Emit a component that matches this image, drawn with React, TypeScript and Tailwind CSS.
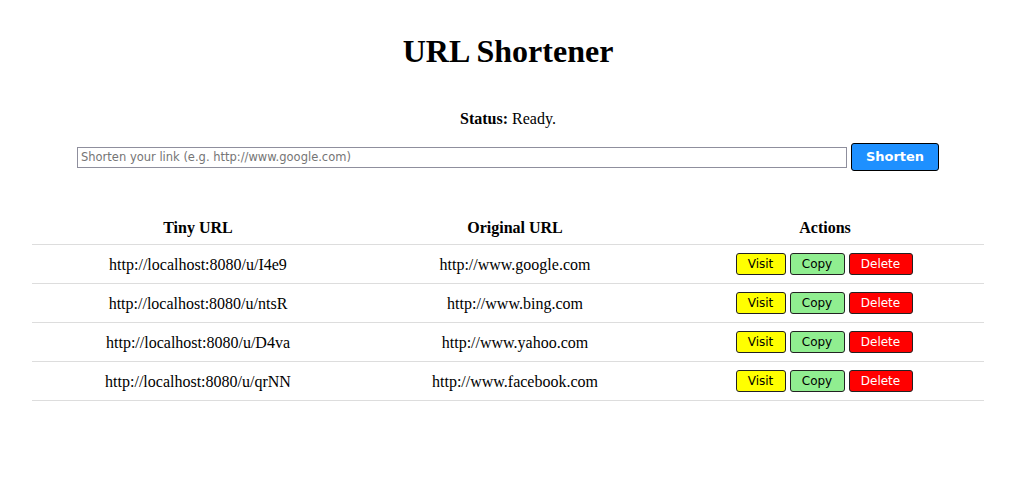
import React from "react";

const rows = [
  { tiny: "http://localhost:8080/u/I4e9", orig: "http://www.google.com" },
  { tiny: "http://localhost:8080/u/ntsR", orig: "http://www.bing.com" },
  { tiny: "http://localhost:8080/u/D4va", orig: "http://www.yahoo.com" },
  { tiny: "http://localhost:8080/u/qrNN", orig: "http://www.facebook.com" },
];

const sans = "font-['DejaVu_Sans',Verdana,sans-serif]";

export default function App() {
  return (
    <div className="w-[1016px] bg-white text-black font-['Liberation_Serif','Times_New_Roman',serif] text-[16px]">
      <h1 className="text-center text-[32px] font-bold leading-[37px] pt-[33px]">URL Shortener</h1>
      <p className="text-center mt-[40px] leading-[18px]">
        <b>Status:</b> Ready.
      </p>
      <div className="flex justify-center items-center gap-[4px] mt-[15px]">
        <input
          className={`w-[770px] h-[21px] border border-[#8f8f9d] px-[3px] text-[11.5px] ${sans} placeholder:text-[#757575] outline-none`}
          placeholder="Shorten your link (e.g. http://www.google.com)"
        />
        <button
          className={`w-[88px] h-[28px] bg-[#1e90ff] border border-black rounded-[3px] text-white font-bold text-[13px] ${sans}`}
        >
          Shorten
        </button>
      </div>
      <table className="ml-[32px] mt-[39px] w-[952px] border-collapse">
        <thead>
          <tr className="border-b border-[#dddddd] h-[34px]">
            <th className="w-[332px] font-bold pt-[2px]">Tiny URL</th>
            <th className="w-[302px] font-bold pt-[2px]">Original URL</th>
            <th className="w-[318px] font-bold pt-[2px]">Actions</th>
          </tr>
        </thead>
        <tbody>
          {rows.map((r) => (
            <tr key={r.tiny} className="border-b border-[#dddddd] h-[39px]">
              <td className="text-center pt-[3px]">{r.tiny}</td>
              <td className="text-center pt-[3px]">{r.orig}</td>
              <td>
                <div className={`flex justify-center gap-[4px] pr-[2px] text-[12px] ${sans}`}>
                  <button className="w-[50px] h-[22px] bg-[#ffff00] border border-[#222] rounded-[3px] text-black">Visit</button>
                  <button className="w-[55px] h-[22px] bg-[#90ee90] border border-[#222] rounded-[3px] text-black">Copy</button>
                  <button className="w-[64px] h-[22px] bg-[#ff0000] border border-[#222] rounded-[3px] text-white">Delete</button>
                </div>
              </td>
            </tr>
          ))}
        </tbody>
      </table>
      <div className="h-[87px]" />
    </div>
  );
}
